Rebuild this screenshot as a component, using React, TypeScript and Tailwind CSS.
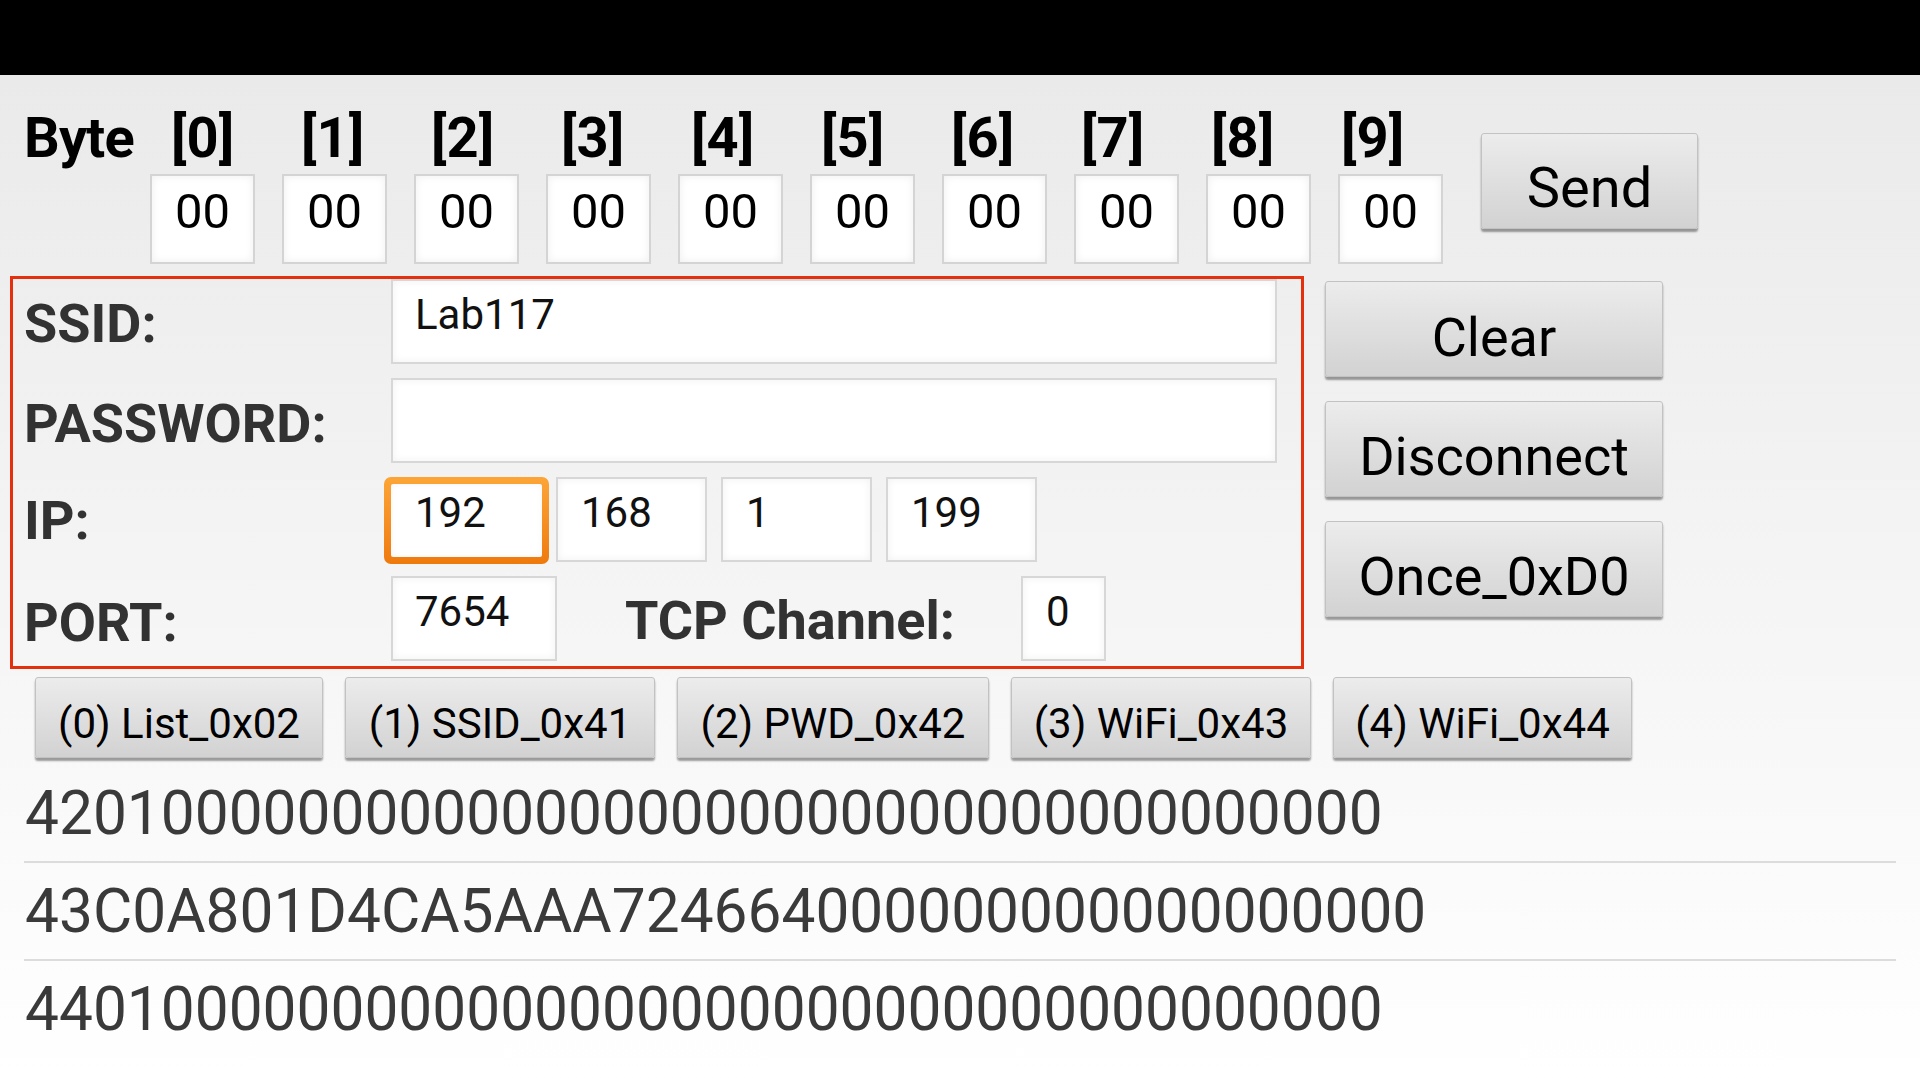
import React from "react";

function Btn({
  children,
  className,
  textClass,
}: {
  children: React.ReactNode;
  className: string;
  textClass: string;
}) {
  return (
    <div
      className={
        "flex shrink-0 justify-center rounded-[3px] border border-[#c2c2c2] bg-gradient-to-b from-[#ececec] to-[#d2d2d2] shadow-[0_3px_2px_rgba(0,0,0,0.38)] text-black " +
        className
      }
    >
      <span className={"leading-none whitespace-nowrap " + textClass}>{children}</span>
    </div>
  );
}

function Field({
  className,
  children,
}: {
  className: string;
  children?: React.ReactNode;
}) {
  return (
    <div
      className={
        "shrink-0 border-2 border-[#d7d7d7] bg-white shadow-[inset_0_0_8px_rgba(0,0,0,0.06)] " + className
      }
    >
      <div className="text-[42px] leading-none text-[#111] whitespace-nowrap">{children}</div>
    </div>
  );
}

export default function App() {
  const labels = ["[0]", "[1]", "[2]", "[3]", "[4]", "[5]", "[6]", "[7]", "[8]"];
  const boxes = [0, 1, 2, 3, 4, 5, 6, 7, 8, 9];
  const rows = [
    "4201000000000000000000000000000000000000",
    "43C0A801D4CA5AAA724664000000000000000000",
    "4401000000000000000000000000000000000000",
  ];
  return (
    <div className="w-[1920px] h-[1080px] flex flex-col overflow-hidden font-['Roboto',sans-serif]">
      <div className="h-[75px] shrink-0 bg-black" />
      <div className="flex-1 flex flex-col bg-gradient-to-b from-[#eaeaea] to-[#ffffff]">
        {/* Byte row */}
        <div className="flex">
          <div className="flex flex-col w-[1443px] shrink-0">
            <div className="flex mt-[35px] h-[56px] text-[56px] font-bold leading-none text-black">
              <span className="w-[171px] pl-[24px] shrink-0 tracking-[-0.8px]">Byte</span>
              {labels.map((l) => (
                <span key={l} className="w-[130px] shrink-0">
                  {l}
                </span>
              ))}
              <span className="shrink-0">[9]</span>
            </div>
            <div className="flex mt-[8px] pl-[150px] gap-[27px]">
              {boxes.map((b) => (
                <div
                  key={b}
                  className="w-[105px] h-[90px] shrink-0 border-2 border-[#d4d4d4] bg-white shadow-[inset_0_0_8px_rgba(0,0,0,0.07)] flex justify-center pt-[11px]"
                >
                  <span className="text-[49px] leading-none text-black">00</span>
                </div>
              ))}
            </div>
          </div>
          <Btn className="ml-[38px] mt-[58px] w-[217px] h-[96px] pt-[26px]" textClass="text-[56px]">
            Send
          </Btn>
        </div>

        {/* Form row */}
        <div className="flex mt-[12px]">
          <div className="ml-[10px] w-[1294px] h-[393px] shrink-0 border-[3px] border-[#e4300f] flex flex-col">
            {/* SSID */}
            <div className="flex h-[99px] items-start">
              <div className="w-[378px] shrink-0 pl-[11px] mt-[18px] text-[54px] font-bold leading-none text-[#323232]">
                SSID:
              </div>
              <Field className="w-[886px] h-[85px] pl-[22px] pt-[13px]">Lab117</Field>
            </div>
            {/* PASSWORD */}
            <div className="flex h-[99px] items-start">
              <div className="w-[378px] shrink-0 pl-[11px] mt-[19px] text-[54px] font-bold leading-none text-[#323232]">
                PASSWORD:
              </div>
              <Field className="w-[886px] h-[85px] pl-[22px] pt-[13px]" />
            </div>
            {/* IP */}
            <div className="flex h-[99px] items-start">
              <div className="w-[378px] shrink-0 pl-[11px] mt-[17px] text-[54px] font-bold leading-none text-[#323232]">
                IP:
              </div>
              <div className="-ml-[7px] w-[165px] h-[87px] shrink-0 rounded-[7px] bg-gradient-to-b from-[#fca536] to-[#ef7a0b] p-[7px]">
                <div className="w-full h-full rounded-[2px] bg-white shadow-[inset_0_0_6px_rgba(0,0,0,0.05)] pl-[24px] pt-[8px]">
                  <div className="text-[42px] leading-none text-[#111]">192</div>
                </div>
              </div>
              <Field className="ml-[7px] w-[151px] h-[85px] pl-[23px] pt-[13px]">168</Field>
              <Field className="ml-[14px] w-[151px] h-[85px] pl-[23px] pt-[13px]">1</Field>
              <Field className="ml-[14px] w-[151px] h-[85px] pl-[23px] pt-[13px]">199</Field>
            </div>
            {/* PORT */}
            <div className="flex h-[90px] items-start">
              <div className="w-[378px] shrink-0 pl-[11px] mt-[20px] text-[54px] font-bold leading-none text-[#323232]">
                PORT:
              </div>
              <Field className="w-[166px] h-[85px] pl-[22px] pt-[13px]">7654</Field>
              <div className="w-[464px] shrink-0 pl-[68px] mt-[18px] text-[54px] font-bold leading-none text-[#323232] whitespace-nowrap">
                TCP Channel:
              </div>
              <Field className="w-[85px] h-[85px] pl-[23px] pt-[13px]">0</Field>
            </div>
          </div>
          <div className="ml-[21px] mt-[5px] flex flex-col gap-[24px]">
            <Btn className="w-[338px] h-[96px] pt-[29px]" textClass="text-[54px]">
              Clear
            </Btn>
            <Btn className="w-[338px] h-[96px] pt-[28px]" textClass="text-[54px]">
              Disconnect
            </Btn>
            <Btn className="w-[338px] h-[96px] pt-[28px]" textClass="text-[54px]">
              Once_0xD0
            </Btn>
          </div>
        </div>

        {/* Command buttons */}
        <div className="flex mt-[8px] ml-[35px] gap-[22px]">
          <Btn className="w-[288px] h-[81px] pt-[25px]" textClass="text-[42px]">
            (0) List_0x02
          </Btn>
          <Btn className="w-[310px] h-[81px] pt-[25px]" textClass="text-[42px]">
            (1) SSID_0x41
          </Btn>
          <Btn className="w-[312px] h-[81px] pt-[25px]" textClass="text-[42px]">
            (2) PWD_0x42
          </Btn>
          <Btn className="w-[300px] h-[81px] pt-[25px]" textClass="text-[42px]">
            (3) WiFi_0x43
          </Btn>
          <Btn className="w-[299px] h-[81px] pt-[25px]" textClass="text-[42px]">
            (4) WiFi_0x44
          </Btn>
        </div>

        {/* Output list */}
        <div className="flex flex-col mt-[7px] mx-[24px]">
          {rows.map((r, i) => (
            <div
              key={i}
              className={
                i < 2
                  ? "h-[98px] border-b-2 border-[#dcdcdc] pt-[19px]"
                  : "h-[98px] pt-[19px]"
              }
            >
              <div className="text-[60.4px] leading-none text-[#3a3a3a] whitespace-nowrap pl-[1px]">{r}</div>
            </div>
          ))}
        </div>
      </div>
    </div>
  );
}
